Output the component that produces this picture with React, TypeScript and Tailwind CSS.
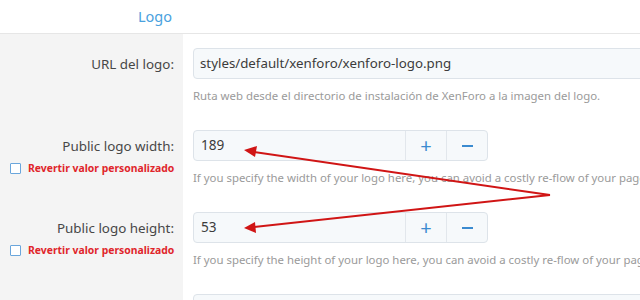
import React from "react";

const font = { fontFamily: '"Noto Sans", "Open Sans", sans-serif' };

interface IRowProps {
  label: string;
  children: React.ReactNode;
  hint: string;
  revert?: boolean;
}

function Row({ label, children, hint, revert }: IRowProps) {
  return (
    <div className="flex h-[82px]">
      <div className="w-[183px] shrink-0 bg-[#f4f4f4] pr-[9px] pt-[19px] flex flex-col items-end">
        <div className="text-[13.4px] leading-[22px] text-[#474747] whitespace-nowrap">{label}</div>
        {revert && (
          <div className="mt-[3px] flex items-center gap-[7px] self-stretch pl-[10px] whitespace-nowrap">
            <span className="shrink-0 w-[11px] h-[11px] border border-[#6aa6dc] rounded-[1px] bg-white" />
            <span className="text-[10.4px] leading-[16px] font-bold text-[#e0252b]">
              Revertir valor personalizado
            </span>
          </div>
        )}
      </div>
      <div className="flex-1 min-w-0 bg-white pl-[10px] pt-[14px] overflow-hidden">
        {children}
        <div className="mt-[8px] text-[11.4px] leading-[18px] text-[#9a9a9a] whitespace-nowrap">
          {hint}
        </div>
      </div>
    </div>
  );
}

function NumberBox({ value }: { value: string }) {
  return (
    <div className="flex w-[295px] h-[31px] border border-[#dde3e9] rounded-[4px] bg-[#f6f9fb] overflow-hidden">
      <div className="flex-1 pl-[7px] flex items-center text-[13.6px] text-[#3c3c3c]">{value}</div>
      <div className="w-[41px] border-l border-[#e2e7ec] flex items-center justify-center text-[#3b8bd0] text-[20px] leading-none">
        +
      </div>
      <div className="w-[41px] border-l border-[#e2e7ec] flex items-center justify-center">
        <span className="block w-[11px] h-[2px] bg-[#3b8bd0]" />
      </div>
    </div>
  );
}

export default function App() {
  return (
    <div className="relative w-[640px] h-[300px] overflow-hidden bg-white" style={font}>
      <div className="h-[34px] border-b border-[#e6e6e6] bg-white flex items-center pl-[138px]">
        <span className="text-[14.5px] text-[#4aa1de]">Logo</span>
      </div>

      <Row
        label="URL del logo:"
        hint="Ruta web desde el directorio de instalación de XenForo a la imagen del logo."
      >
        <div className="h-[31px] w-[460px] border border-[#dde3e9] rounded-[4px] bg-[#f6f9fb] flex items-center pl-[6px] text-[13.3px] text-[#3c3c3c] whitespace-nowrap">
          styles/default/xenforo/xenforo-logo.png
        </div>
      </Row>

      <Row
        label="Public logo width:"
        revert
        hint="If you specify the width of your logo here, you can avoid a costly re-flow of your page"
      >
        <NumberBox value="189" />
      </Row>

      <Row
        label="Public logo height:"
        revert
        hint="If you specify the height of your logo here, you can avoid a costly re-flow of your page"
      >
        <NumberBox value="53" />
      </Row>

      <div className="flex h-[40px]">
        <div className="w-[183px] shrink-0 bg-[#f4f4f4]" />
        <div className="flex-1 min-w-0 bg-white pl-[10px] pt-[14px] overflow-hidden">
          <div className="h-[31px] w-[460px] border border-[#dde3e9] rounded-[4px] bg-[#f6f9fb]" />
        </div>
      </div>

      <svg className="absolute inset-0 pointer-events-none" width="640" height="300">
        <g stroke="#d01515" strokeWidth="2" fill="none">
          <line x1="550" y1="195" x2="254" y2="152" />
          <line x1="550" y1="195" x2="254" y2="227" />
        </g>
        <polygon points="244,150 257,146 255,157" fill="#d01515" />
        <polygon points="244,228 255,222 256,233" fill="#d01515" />
      </svg>
    </div>
  );
}
